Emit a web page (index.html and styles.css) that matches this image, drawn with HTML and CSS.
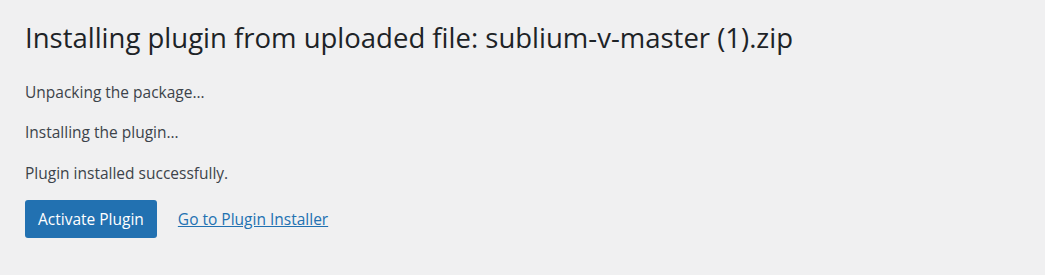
FILE: index.html
```html
<!DOCTYPE html>
<html lang="en">
<head>
    <meta charset="UTF-8">
    <title>Install Plugins</title>
    <link rel="stylesheet" href="styles.css">
</head>
<body>
    <div class="wrap">
        <h1>Installing plugin from uploaded file: sublium-v-master (1).zip</h1>
        <p>Unpacking the package&hellip;</p>
        <p>Installing the plugin&hellip;</p>
        <p class="last">Plugin installed successfully.</p>
        <div class="actions">
            <a href="#" class="button-primary">Activate Plugin</a>
            <a href="#" class="link">Go to Plugin Installer</a>
        </div>
    </div>
</body>
</html>
```

FILE: styles.css
```css
body {
    background-color: #f0f0f1;
    color: #3c434a;
    font-family: "Open Sans", sans-serif;
    margin: 0;
    padding: 0;
}
.wrap {
    padding: 20px 25px;
}
h1 {
    color: #1d2327;
    font-size: 27.5px;
    font-weight: 400;
    margin: 0 0 26px;
    line-height: 1.3;
}
p {
    font-size: 15.5px;
    margin: 0 0 19.5px;
    line-height: 21px;
}
p.last {
    margin-bottom: 16.5px;
}
.actions {
    display: flex;
    align-items: center;
    gap: 21px;
}
.button-primary {
    background-color: #2271b1;
    color: white;
    font-size: 15.5px;
    text-decoration: none;
    padding: 0 13px;
    height: 38px;
    line-height: 38px;
    border-radius: 3px;
}
.link {
    color: #2271b1;
    font-size: 15.5px;
}
```
